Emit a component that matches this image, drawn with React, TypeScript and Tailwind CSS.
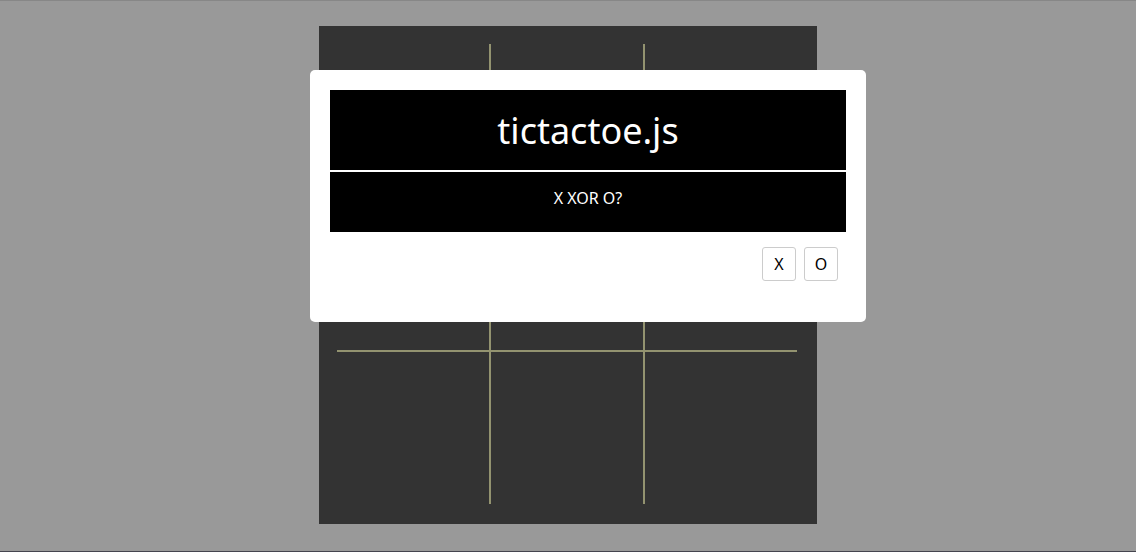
export default function App() {
  const cells = Array.from({ length: 9 });
  return (
    <div
      className="relative w-full h-[552px] bg-[#999999] border-t border-t-[#878787] border-b border-b-[#45454f] overflow-hidden"
      style={{ fontFamily: '"Noto Sans", "Open Sans", sans-serif' }}
    >
      <div className="flex justify-center pt-[25px]">
        <div className="w-[498px] h-[498px] bg-[#333333] pt-[18px] pl-[18px]">
          <div className="grid grid-cols-[152px_152px_152px] grid-rows-[152px_152px_152px] gap-[2px] bg-[#939370] w-[460px] h-[460px]">
            {cells.map((_, i) => (
              <div key={i} className="bg-[#333333]" />
            ))}
          </div>
        </div>
      </div>
      <div className="absolute left-[310px] top-[69px] w-[556px] h-[252px] bg-white rounded-[5px] p-5">
        <div className="bg-black">
          <div className="h-[80px] flex items-center justify-center text-white text-[36px] leading-none pt-[2px]">
            tictactoe.js
          </div>
          <div className="h-[2px] bg-white" />
          <div
            className="h-[60px] flex justify-center text-white text-[16px] leading-[22px] pt-[15px]"
            style={{ fontFamily: '"Noto Sans", sans-serif' }}
          >
            X XOR O?
          </div>
        </div>
        <div className="flex justify-end gap-2 mt-[15px] pr-2">
          <button className="w-[34px] h-[34px] border border-[#cccccc] rounded-[3px] bg-white text-black text-[16px] flex items-center justify-center">
            X
          </button>
          <button className="w-[34px] h-[34px] border border-[#cccccc] rounded-[3px] bg-white text-black text-[16px] flex items-center justify-center">
            O
          </button>
        </div>
      </div>
    </div>
  );
}
